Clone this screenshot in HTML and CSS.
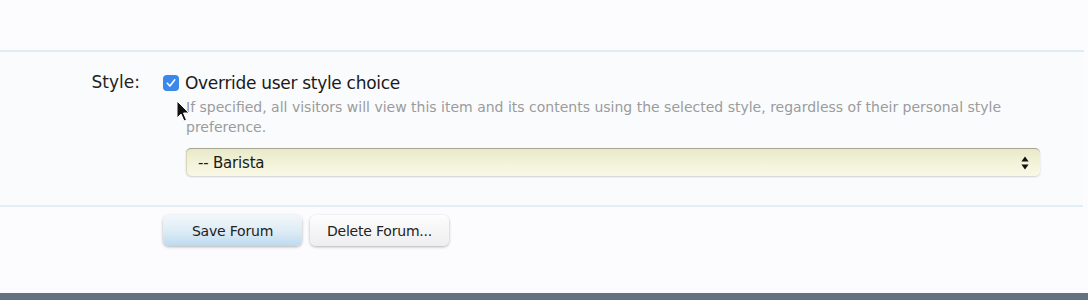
FILE: index.html
```html
<!DOCTYPE html>
<html>
<head>
<meta charset="utf-8">
<link rel="stylesheet" href="styles.css">
</head>
<body>
<div class="page">
  <div class="top"></div>
  <div class="ctrl-row">
    <div class="label">Style:</div>
    <div class="field">
      <label class="check">
        <span class="box"><svg width="16" height="16" viewBox="0 0 16 16"><path d="M4.3 8.3 L6.9 11 L11.8 4.8" fill="none" stroke="#fff" stroke-width="1.6" stroke-linecap="round" stroke-linejoin="round"/></svg></span>
        <span class="check-text">Override user style choice</span>
      </label>
      <p class="explain">If specified, all visitors will view this item and its contents using the selected style, regardless of their personal style preference.</p>
      <div class="select">
        <span>-- Barista</span>
        <svg class="arrows" width="8" height="14" viewBox="0 0 8 14"><path d="M4 0.5 L7.6 5.5 L0.4 5.5 Z M4 13.5 L7.6 8.5 L0.4 8.5 Z" fill="#111"/></svg>
      </div>
    </div>
    <svg class="cursor" width="16" height="24" viewBox="0 0 16 24"><path d="M1 1 L1 18 L5 14 L8 21 L10.5 20 L7.5 13 L13 13 Z" fill="#111" stroke="#fff" stroke-width="1"/></svg>
  </div>
  <div class="buttons">
    <button class="btn primary">Save Forum</button>
    <button class="btn">Delete Forum...</button>
  </div>
  <div class="footer"></div>
</div>
</body>
</html>
```
FILE: styles.css
```css
html, body {
  margin: 0;
  padding: 0;
  background: #fcfcfe;
  font-family: "DejaVu Sans", Verdana, sans-serif;
}
.page {
  width: 1088px;
  height: 300px;
  display: flex;
  flex-direction: column;
  overflow: hidden;
}
.top {
  height: 50px;
  margin-right: 4px;
  border-bottom: 2px solid #e1ebf4;
}
.ctrl-row {
  position: relative;
  height: 155px;
  margin-right: 5px;
  border-bottom: 2px solid #e3eef6;
  background: #fafbfd;
  display: flex;
  padding-top: 19px;
  box-sizing: border-box;
}
.label {
  width: 140px;
  text-align: right;
  font-size: 17px;
  color: #222;
  padding-top: 1px;
}
.field {
  margin-left: 23px;
  display: flex;
  flex-direction: column;
}
.check {
  display: flex;
  align-items: center;
  height: 24px;
}
.box {
  width: 16px;
  height: 16px;
  border-radius: 4px;
  background: #3b88ea;
  display: flex;
  margin-right: 6px;
}
.check-text {
  font-size: 17px;
  color: #1a1a1a;
  letter-spacing: -0.3px;
}
.explain {
  margin: 2px 0 0 23px;
  width: 860px;
  font-size: 14px;
  line-height: 20px;
  color: #9b9b9b;
}
.select {
  margin: 11px 0 0 23px;
  width: 854px;
  height: 28px;
  box-sizing: border-box;
  border-radius: 5px;
  border-top: 1px solid #a5a594;
  background: linear-gradient(#e9e9c9, #f4f4dc 60%, #f8f8e6);
  box-shadow: 0 1px 2px rgba(0,0,0,0.18), inset 1px 0 0 #d8d8b8;
  display: flex;
  align-items: center;
  justify-content: space-between;
  padding: 0 11px 0 12px;
  font-size: 15px;
  color: #1a1a1a;
  letter-spacing: -0.2px;
}
.cursor {
  position: absolute;
  left: 176px;
  top: 48px;
}
.buttons {
  display: flex;
  gap: 8px;
  padding: 8px 0 0 163px;
  height: 86px;
  box-sizing: border-box;
}
.btn {
  font-family: "DejaVu Sans", Verdana, sans-serif;
  font-size: 14px;
  color: #222;
  height: 31px;
  width: 139px;
  border: none;
  border-radius: 6px;
  background: linear-gradient(#fdfdfd, #eeeef0);
  box-shadow: 0 1px 3px rgba(0,0,0,0.3);
  letter-spacing: -0.2px;
}
.btn.primary {
  background: linear-gradient(#f2f7fb, #dcebf5 55%, #bcdaef);
}
.footer {
  flex: 1;
  background: #64737e;
}
```
